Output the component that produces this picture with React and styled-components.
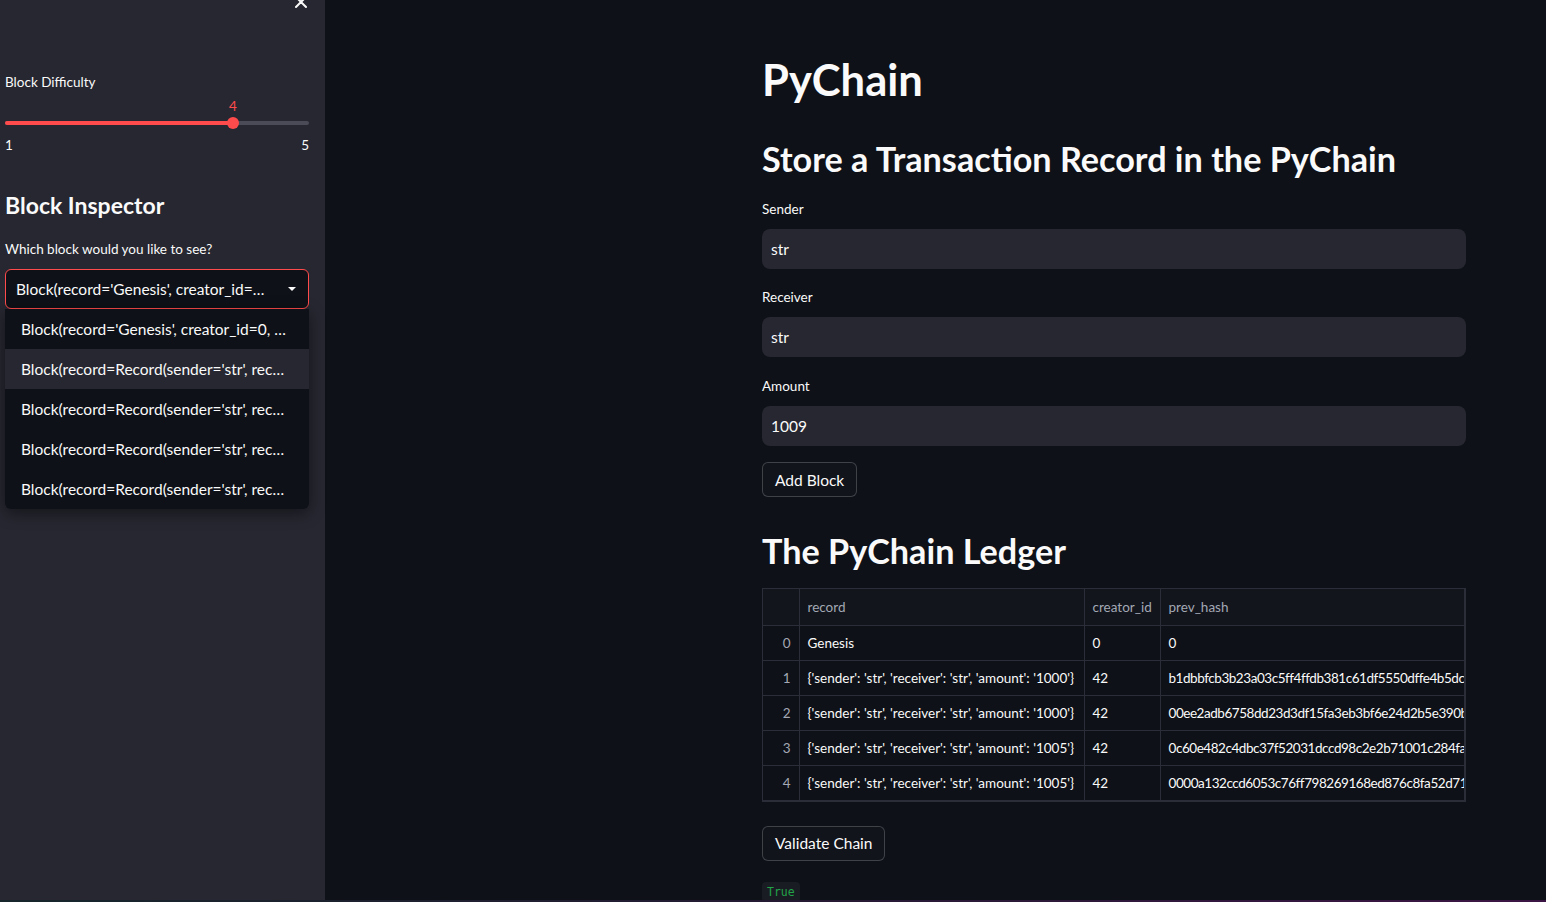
import styled, { createGlobalStyle } from "styled-components";

const GlobalStyle = createGlobalStyle`
  html, body {
    margin: 0;
    padding: 0;
    background: #0e1117;
    overflow: hidden;
  }
  * {
    box-sizing: border-box;
  }
  body {
    font-family: Lato, "Noto Sans", sans-serif;
    color: #fafafa;
  }
`;

const Page = styled.div`
  display: flex;
  flex-direction: column;
  height: 902px;
  width: 1546px;
`;

const Body = styled.div`
  display: flex;
  flex: 1;
  min-height: 0;
`;

// bottom decoration line
const Decoration = styled.div`
  height: 2px;
  flex-shrink: 0;
  background: linear-gradient(90deg, #16262b 0%, #241a33 50%, #3b1544 100%);
`;

// ---------- sidebar ----------
const Sidebar = styled.aside`
  position: relative;
  width: 325px;
  flex-shrink: 0;
  background: #262730;
  padding: 71px 16px 0 5px;
  display: flex;
  flex-direction: column;
  & > * {
    flex-shrink: 0;
  }
`;

const CloseButton = styled.div`
  position: absolute;
  top: -7px;
  left: 294px;
  width: 14px;
  height: 14px;
  color: #fafafa;
`;

const SideLabel = styled.div`
  font-size: 13.5px;
  line-height: 22px;
  color: #fafafa;
`;

const SliderBox = styled.div`
  display: flex;
  flex-direction: column;
  margin-top: 2px;
`;

const SliderValueRow = styled.div`
  position: relative;
  height: 22px;
`;

const SliderValue = styled.span`
  position: absolute;
  top: 0;
  transform: translateX(-50%);
  font-size: 13.5px;
  line-height: 22px;
  color: #ff4b4b;
`;

const Track = styled.div`
  position: relative;
  height: 12px;
  display: flex;
  align-items: center;
`;

const TrackRail = styled.div`
  width: 100%;
  height: 4px;
  border-radius: 2px;
  background: #4a4b57;
  overflow: hidden;
`;

const TrackFill = styled.div`
  height: 100%;
  background: #ff4b4b;
`;

const Thumb = styled.div`
  position: absolute;
  top: 0;
  width: 12px;
  height: 12px;
  margin-left: -6px;
  border-radius: 50%;
  background: #ff4b4b;
`;

const TickRow = styled.div`
  display: flex;
  justify-content: space-between;
  margin-top: 5px;
  font-size: 13.5px;
  line-height: 22px;
  color: #fafafa;
`;

const SideHeading = styled.h2`
  margin: 35px 0 0;
  font-size: 23px;
  font-weight: 700;
  line-height: 29px;
  color: #fafafa;
`;

const SelectWrap = styled.div`
  position: relative;
  margin-top: 9px;
`;

const SelectBox = styled.div`
  height: 40px;
  border: 1px solid #ff4b4b;
  border-radius: 6px;
  background: #0e1117;
  display: flex;
  align-items: center;
  justify-content: space-between;
  padding: 0 12px 0 10px;
  font-size: 15.5px;
  white-space: nowrap;
`;

const Caret = styled.span`
  width: 0;
  height: 0;
  border-left: 4px solid transparent;
  border-right: 4px solid transparent;
  border-top: 4px solid #fafafa;
`;

const Menu = styled.ul`
  position: absolute;
  top: 40px;
  left: 0;
  right: 0;
  margin: 0;
  padding: 0;
  list-style: none;
  background: #0e1117;
  border-radius: 0 0 6px 6px;
  box-shadow: 0 4px 16px rgba(0, 0, 0, 0.45);
  overflow: hidden;
`;

const MenuItem = styled.li`
  height: 40px;
  display: flex;
  align-items: center;
  padding: 0 16px;
  font-size: 15.5px;
  white-space: nowrap;
  background: ${(props) => (props.$active ? "#262730" : "transparent")};
`;

// ---------- main ----------
const Main = styled.main`
  flex: 1;
  min-width: 0;
  overflow: hidden;
  padding: 53px 80px 0 437px;
  display: flex;
  flex-direction: column;
  & > * {
    flex-shrink: 0;
  }
`;

const Title = styled.h1`
  margin: 0;
  font-size: 43.5px;
  font-weight: 700;
  line-height: 53px;
  color: #fafafa;
`;

const Heading = styled.h2`
  margin: ${(props) => props.$top}px 0 0;
  font-size: 34.2px;
  font-weight: 700;
  line-height: 43px;
  color: #fafafa;
`;

const Field = styled.div`
  display: flex;
  flex-direction: column;
  margin-top: ${(props) => props.$top}px;
`;

const FieldLabel = styled.label`
  font-size: 13.5px;
  line-height: 22px;
  color: #fafafa;
`;

const TextInput = styled.div`
  margin-top: 9px;
  height: 40px;
  border-radius: 8px;
  background: #262730;
  display: flex;
  align-items: center;
  padding: 0 9px;
  font-size: 15.5px;
  color: #fafafa;
`;

const Button = styled.button`
  align-self: flex-start;
  margin-top: ${(props) => props.$top}px;
  height: ${(props) => props.$height}px;
  padding: 0 12px;
  border: 1px solid rgba(250, 250, 250, 0.2);
  border-radius: 6px;
  background: #11141b;
  color: #fafafa;
  font-family: inherit;
  font-size: 15.5px;
`;

const TableWrap = styled.div`
  margin-top: 16px;
  border: 1px solid #2b2e38;
  overflow: hidden;
`;

const Table = styled.table`
  width: 100%;
  table-layout: fixed;
  border-collapse: collapse;
  font-size: 13.5px;
`;

const HeadCell = styled.th`
  height: 36px;
  padding: 0 8px;
  text-align: left;
  font-weight: 400;
  color: #a3a8b4;
  background: #12151c;
  border-right: 1px solid #2b2e38;
  border-bottom: 1px solid #2b2e38;
  white-space: nowrap;
  overflow: hidden;
`;

const Cell = styled.td`
  height: 35px;
  padding: 0 8px;
  text-align: ${(props) => (props.$index ? "right" : "left")};
  color: ${(props) => (props.$index ? "#a3a8b4" : "#fafafa")};
  letter-spacing: ${(props) => (props.$hash ? "-0.45px" : "normal")};
  border-right: 1px solid #2b2e38;
  border-bottom: 1px solid #2b2e38;
  white-space: nowrap;
  overflow: hidden;
`;

const CodeTag = styled.code`
  align-self: flex-start;
  margin-top: 21px;
  padding: 2px 5px;
  border-radius: 4px;
  background: #1a1c23;
  color: #21a348;
  font-family: "DejaVu Sans Mono", monospace;
  font-size: 11.5px;
  line-height: 16px;
`;

const blocks = [
  "Block(record='Genesis', creator_id=0, …",
  "Block(record=Record(sender='str', rec…",
  "Block(record=Record(sender='str', rec…",
  "Block(record=Record(sender='str', rec…",
  "Block(record=Record(sender='str', rec…",
];

const rows = [
  { record: "Genesis", creator: "0", hash: "0" },
  {
    record: "{'sender': 'str', 'receiver': 'str', 'amount': '1000'}",
    creator: "42",
    hash: "b1dbbfcb3b23a03c5ff4ffdb381c61df5550dffe4b5dc",
  },
  {
    record: "{'sender': 'str', 'receiver': 'str', 'amount': '1000'}",
    creator: "42",
    hash: "00ee2adb6758dd23d3df15fa3eb3bf6e24d2b5e390b",
  },
  {
    record: "{'sender': 'str', 'receiver': 'str', 'amount': '1005'}",
    creator: "42",
    hash: "0c60e482c4dbc37f52031dccd98c2e2b71001c284fa4",
  },
  {
    record: "{'sender': 'str', 'receiver': 'str', 'amount': '1005'}",
    creator: "42",
    hash: "0000a132ccd6053c76ff798269168ed876c8fa52d714",
  },
];

function Slider({ min, max, value }) {
  const pct = ((value - min) / (max - min)) * 100;
  return (
    <SliderBox>
      <SliderValueRow>
        <SliderValue style={{ left: `${pct}%` }}>{value}</SliderValue>
      </SliderValueRow>
      <Track>
        <TrackRail>
          <TrackFill style={{ width: `${pct}%` }} />
        </TrackRail>
        <Thumb style={{ left: `${pct}%` }} />
      </Track>
      <TickRow>
        <span>{min}</span>
        <span>{max}</span>
      </TickRow>
    </SliderBox>
  );
}

export default function App() {
  return (
    <Page>
      <GlobalStyle />
      <Body>
        <Sidebar>
          <CloseButton>
            <svg width="14" height="14" viewBox="0 0 14 14">
              <path
                d="M2 2 L12 12 M12 2 L2 12"
                stroke="currentColor"
                strokeWidth="2"
                strokeLinecap="round"
              />
            </svg>
          </CloseButton>
          <SideLabel>Block Difficulty</SideLabel>
          <Slider min={1} max={5} value={4} />
          <SideHeading>Block Inspector</SideHeading>
          <SideLabel style={{ marginTop: 18 }}>
            Which block would you like to see?
          </SideLabel>
          <SelectWrap>
            <SelectBox>
              <span>Block(record='Genesis', creator_id=…</span>
              <Caret />
            </SelectBox>
            <Menu>
              {blocks.map((b, i) => (
                <MenuItem key={i} $active={i === 1}>
                  {b}
                </MenuItem>
              ))}
            </Menu>
          </SelectWrap>
        </Sidebar>

        <Main>
          <Title>PyChain</Title>
          <Heading $top={31}>Store a Transaction Record in the PyChain</Heading>
          <Field $top={18}>
            <FieldLabel>Sender</FieldLabel>
            <TextInput>str</TextInput>
          </Field>
          <Field $top={17}>
            <FieldLabel>Receiver</FieldLabel>
            <TextInput>str</TextInput>
          </Field>
          <Field $top={18}>
            <FieldLabel>Amount</FieldLabel>
            <TextInput>1009</TextInput>
          </Field>
          <Button $top={16} $height={35}>Add Block</Button>

          <Heading $top={32}>The PyChain Ledger</Heading>
          <TableWrap>
            <Table>
              <colgroup>
                <col style={{ width: 36 }} />
                <col style={{ width: 285 }} />
                <col style={{ width: 76 }} />
                <col />
              </colgroup>
              <thead>
                <tr>
                  <HeadCell />
                  <HeadCell>record</HeadCell>
                  <HeadCell>creator_id</HeadCell>
                  <HeadCell>prev_hash</HeadCell>
                </tr>
              </thead>
              <tbody>
                {rows.map((r, i) => (
                  <tr key={i}>
                    <Cell $index>{i}</Cell>
                    <Cell>{r.record}</Cell>
                    <Cell>{r.creator}</Cell>
                    <Cell $hash>{r.hash}</Cell>
                  </tr>
                ))}
              </tbody>
            </Table>
          </TableWrap>
          <Button $top={24} $height={35}>Validate Chain</Button>
          <CodeTag>True</CodeTag>
        </Main>
      </Body>
      <Decoration />
    </Page>
  );
}
